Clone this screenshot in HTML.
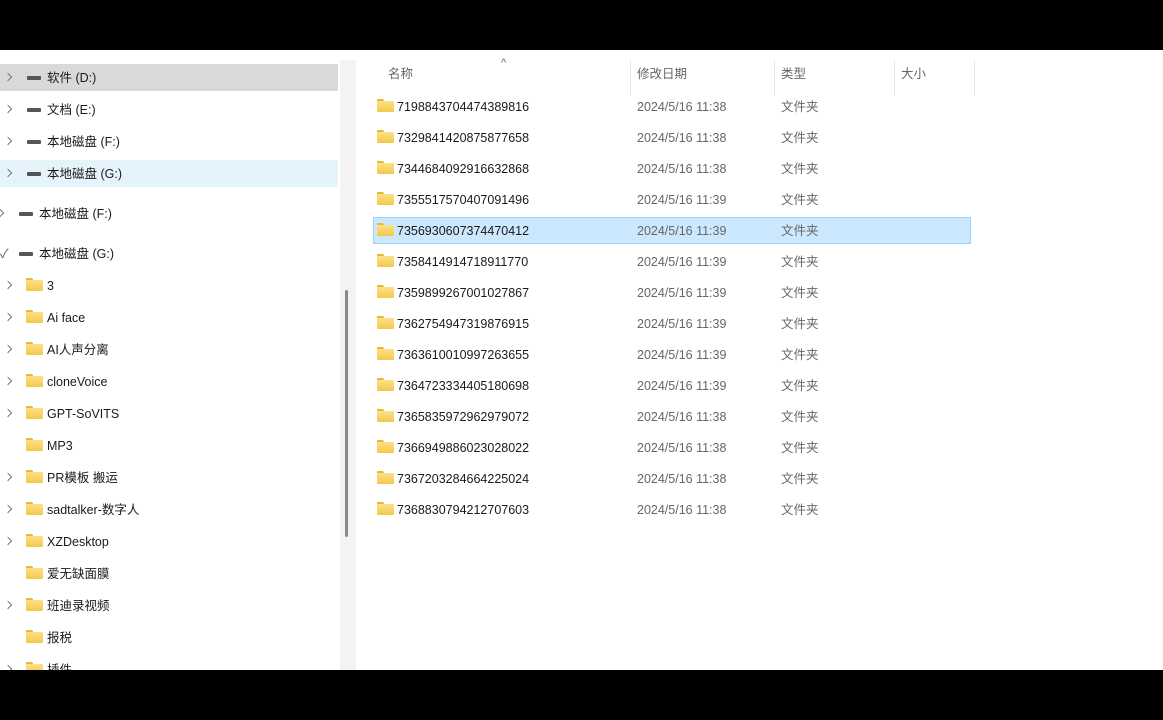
<!DOCTYPE html>
<html><head><meta charset="utf-8"><style>
*{margin:0;padding:0;box-sizing:border-box}
body{width:1163px;height:720px;background:#000;position:relative;overflow:hidden;font-family:"Liberation Sans","Noto Sans CJK SC",sans-serif;font-size:12.5px;color:#1a1a1a}
#main{position:absolute;left:0;top:50px;width:1163px;height:620px;background:#fff;overflow:hidden}
.t{position:absolute;white-space:nowrap;line-height:16px;margin-top:1px}
.chev{position:absolute;width:6px;height:6px;border-right:1.3px solid #777;border-top:1.3px solid #777;transform:rotate(45deg)}
.drive{position:absolute;width:14px;height:4px;background:#555;border-radius:1px}
.fold{position:absolute;width:17px;height:13px}
.fold:before{content:"";position:absolute;left:0;top:0;width:7px;height:4px;background:#e8b834;border-radius:1px 2px 0 0}
.fold:after{content:"";position:absolute;left:0;top:2px;width:17px;height:11px;background:linear-gradient(#fde08a,#f5c84c);border-radius:1px}
.g{color:#666}
.sep{position:absolute;top:10px;width:1px;height:36px;background:#e5e5e5}
</style></head><body>
<div id="main">
<div style="position:absolute;left:0;top:14px;width:338px;height:27px;background:#d9d9d9"></div>
<div style="position:absolute;left:0;top:110px;width:338px;height:27px;background:#e5f3fb"></div>
<div style="position:absolute;left:340px;top:10px;width:16px;height:610px;background:#f3f3f3"></div>
<div style="position:absolute;left:345px;top:240px;width:3px;height:247px;background:#8a8a8a;border-radius:2px"></div>

<div class="chev" style="left:5px;top:24px"></div><div class="drive" style="left:27px;top:26px"></div><div class="t" style="left:47px;top:19px">软件 (D:)</div>
<div class="chev" style="left:5px;top:56px"></div><div class="drive" style="left:27px;top:58px"></div><div class="t" style="left:47px;top:51px">文档 (E:)</div>
<div class="chev" style="left:5px;top:88px"></div><div class="drive" style="left:27px;top:90px"></div><div class="t" style="left:47px;top:83px">本地磁盘 (F:)</div>
<div class="chev" style="left:5px;top:120px"></div><div class="drive" style="left:27px;top:122px"></div><div class="t" style="left:47px;top:115px">本地磁盘 (G:)</div>
<div class="chev" style="left:-3px;top:160px"></div><div class="drive" style="left:19px;top:162px"></div><div class="t" style="left:39px;top:155px">本地磁盘 (F:)</div>
<div class="t" style="left:0px;top:195px;color:#555">✓</div><div class="drive" style="left:19px;top:202px"></div><div class="t" style="left:39px;top:195px">本地磁盘 (G:)</div>

<div class="chev" style="left:5px;top:232px"></div><div class="fold" style="left:26px;top:228px"></div><div class="t" style="left:47px;top:227px">3</div>
<div class="chev" style="left:5px;top:264px"></div><div class="fold" style="left:26px;top:260px"></div><div class="t" style="left:47px;top:259px">Ai face</div>
<div class="chev" style="left:5px;top:296px"></div><div class="fold" style="left:26px;top:292px"></div><div class="t" style="left:47px;top:291px">AI人声分离</div>
<div class="chev" style="left:5px;top:328px"></div><div class="fold" style="left:26px;top:324px"></div><div class="t" style="left:47px;top:323px">cloneVoice</div>
<div class="chev" style="left:5px;top:360px"></div><div class="fold" style="left:26px;top:356px"></div><div class="t" style="left:47px;top:355px">GPT-SoVITS</div>
<div class="fold" style="left:26px;top:388px"></div><div class="t" style="left:47px;top:387px">MP3</div>
<div class="chev" style="left:5px;top:424px"></div><div class="fold" style="left:26px;top:420px"></div><div class="t" style="left:47px;top:419px">PR模板 搬运</div>
<div class="chev" style="left:5px;top:456px"></div><div class="fold" style="left:26px;top:452px"></div><div class="t" style="left:47px;top:451px">sadtalker-数字人</div>
<div class="chev" style="left:5px;top:488px"></div><div class="fold" style="left:26px;top:484px"></div><div class="t" style="left:47px;top:483px">XZDesktop</div>
<div class="fold" style="left:26px;top:516px"></div><div class="t" style="left:47px;top:515px">爱无缺面膜</div>
<div class="chev" style="left:5px;top:552px"></div><div class="fold" style="left:26px;top:548px"></div><div class="t" style="left:47px;top:547px">班迪录视频</div>
<div class="fold" style="left:26px;top:580px"></div><div class="t" style="left:47px;top:579px">报税</div>
<div class="chev" style="left:5px;top:616px"></div><div class="fold" style="left:26px;top:612px"></div><div class="t" style="left:47px;top:611px">插件</div>

<div class="t g" style="left:388px;top:15px">名称</div>
<div class="t g" style="left:501px;top:4px;font-size:11px">^</div>
<div class="sep" style="left:630px"></div><div class="t g" style="left:637px;top:15px">修改日期</div>
<div class="sep" style="left:774px"></div><div class="t g" style="left:781px;top:15px">类型</div>
<div class="sep" style="left:894px"></div><div class="t g" style="left:901px;top:15px">大小</div>
<div class="sep" style="left:974px"></div>

<div style="position:absolute;left:373px;top:167px;width:598px;height:27px;background:#cce8ff;border:1px solid #99d1ff"></div>
<div id="rows"></div>
</div>
<script>
var n=["7198843704474389816","7329841420875877658","7344684092916632868","7355517570407091496","7356930607374470412","7358414914718911770","7359899267001027867","7362754947319876915","7363610010997263655","7364723334405180698","7365835972962979072","7366949886023028022","7367203284664225024","7368830794212707603"];
var t=["11:38","11:38","11:38","11:39","11:39","11:39","11:39","11:39","11:39","11:39","11:38","11:38","11:38","11:38"];
var h="";
for(var i=0;i<n.length;i++){var y=56+31*i;
h+='<div class="fold" style="left:377px;top:'+(y-7)+'px"></div><div class="t" style="left:397px;top:'+(y-8)+'px">'+n[i]+'</div><div class="t g" style="left:637px;top:'+(y-8)+'px">2024/5/16 '+t[i]+'</div><div class="t g" style="left:781px;top:'+(y-8)+'px">文件夹</div>';}
document.getElementById("rows").innerHTML=h;
</script>
</body></html>
